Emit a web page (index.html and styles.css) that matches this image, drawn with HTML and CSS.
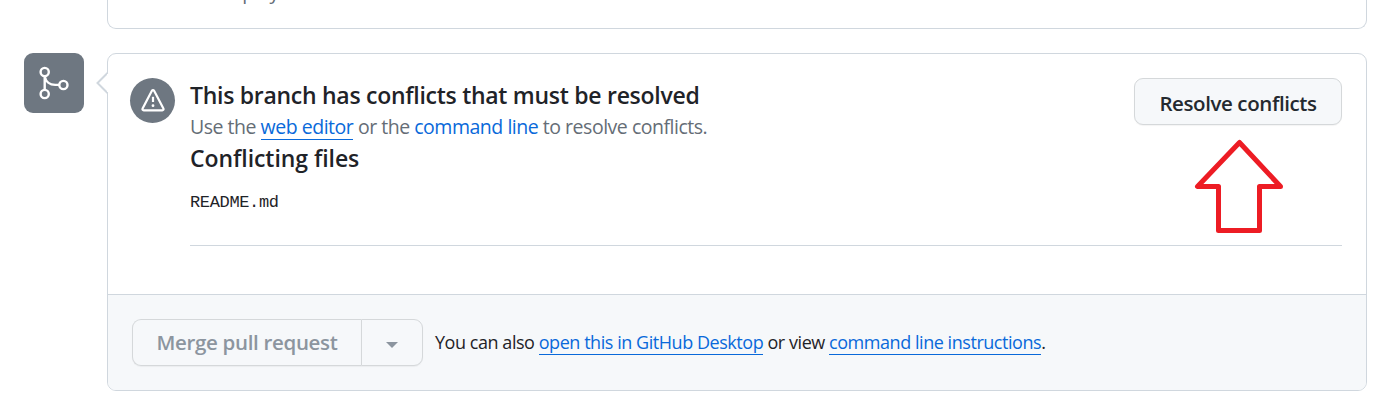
FILE: index.html
```html
<!DOCTYPE html>
<html lang="en">
<head>
<meta charset="utf-8">
<title>Merge conflicts</title>
<link rel="stylesheet" href="styles.css">
</head>
<body>
<section class="previous"><p class="previous-text">No deployments</p></section>
<main class="merge">
  <div class="avatar">
    <svg width="60" height="60" viewBox="0 0 60 60" fill="none" stroke="#fff" stroke-width="2.4"><circle cx="20.700" cy="19" r="4.100"/><circle cx="20.700" cy="41" r="4.100"/><circle cx="39.400" cy="32" r="4.100"/><path d="M20.700 23v14M20.700 23.500c1 5 5 8.400 10.500 8.400h4.300"/></svg>
  </div>
  <div class="panel">
    <svg class="caret" width="13" height="24" viewBox="0 0 13 24"><path d="M11.500 2 1.500 12 11.500 22" fill="#fff" stroke="#d0d7de" stroke-width="2"/><path d="M11.500 3v18" stroke="#fff"/></svg>
    <div class="status">
      <div class="warning">
        <svg width="45" height="45" viewBox="0 0 45 45" fill="none" stroke="#fff" stroke-linejoin="round"><path d="M21.900 12.800 12.600 30.400c-.5 1 .1 1.900 1.100 1.900h18.600c1 0 1.600-.9 1.100-1.900L24.100 12.800c-.5-.8-1.700-.8-2.200 0Z" stroke-width="2.200"/><path d="M23 18.800v5.200" stroke-width="2.200"/><circle cx="23" cy="27.700" r="1.400" fill="#fff" stroke="none"/></svg>
      </div>
      <div class="details">
        <div class="top">
          <div class="copy">
            <h2 class="heading">This branch has conflicts that must be resolved</h2>
            <p class="hint">Use the <a class="link underlined">web editor</a> or the <a class="link">command line</a> to resolve conflicts.</p>
            <h2 class="heading second">Conflicting files</h2>
          </div>
          <button class="button resolve">Resolve conflicts</button>
        </div>
        <div class="files">README.md</div>
      </div>
    </div>
    <footer class="footer">
      <div class="group">
        <button class="button pull">Merge pull request</button>
        <button class="button more" aria-label="More options"><svg width="12" height="6" viewBox="0 0 12 6"><path d="M0 0h12L6 6Z" fill="#8c959f"/></svg></button>
      </div>
      <p class="note">You can also <a class="link underlined">open this in GitHub Desktop</a> or view <a class="link underlined">command line instructions</a>.</p>
    </footer>
  </div>
  <svg class="arrow" width="90" height="96" viewBox="0 0 90 96"><path d="M45.500 4.500 3.500 48.500H24.500V92.500H65.500V48.500H86.500Z" fill="none" stroke="#ed1c24" stroke-width="5" stroke-linejoin="round"/></svg>
</main>
</body>
</html>
```
FILE: styles.css
```css
* { box-sizing: border-box; }
body { margin: 0; height: 403px; overflow: hidden; background: #fff; color: #1f2328; font-family: "Open Sans", "Noto Sans", sans-serif; }
h2, p { margin: 0; font-weight: 400; white-space: nowrap; }
.previous { height: 29px; margin: 0 18px 24px 107px; border: 1px solid #d0d7de; border-top: 0; border-radius: 0 0 9px 9px; overflow: hidden; }
.previous-text { margin: -21px 0 0 82px; font-size: 19.500px; line-height: 26px; letter-spacing: -.440px; color: #656d76; }
.merge { position: relative; display: flex; gap: 23px; padding: 0 18px 0 24px; }
.avatar { flex: none; width: 60px; height: 60px; border-radius: 9px; background: #6e7781; }
.avatar svg, .warning svg { display: block; }
.panel { position: relative; flex: 1; height: 338px; display: flex; flex-direction: column; border: 1px solid #d0d7de; border-radius: 9px; }
.caret { position: absolute; left: -12px; top: 17px; }
.status { flex: 1; display: flex; gap: 15px; padding: 24px 24px 0 22px; }
.warning { flex: none; width: 45px; height: 45px; border-radius: 50%; background: #6e7781; }
.details { flex: 1; height: 168px; border-bottom: 1px solid #d0d7de; }
.top { display: flex; justify-content: space-between; }
.copy { margin-top: -1px; }
.heading { font-size: 23px; line-height: 36px; font-weight: 600; letter-spacing: -.280px; }
.second { letter-spacing: -.060px; }
.hint { height: 27px; font-size: 19.500px; line-height: 27px; color: #656d76; letter-spacing: -.480px; }
.link { color: #0969da; }
.underlined { border-bottom: 1px solid #0969da; }
.hint .underlined { display: inline-block; height: 27px; }
.note .underlined { display: inline-block; height: 25px; }
.button { height: 47px; padding: 0; border: 1px solid #d5d8da; border-radius: 9px; background: #f6f8fa; box-shadow: 0 1px 1px rgba(31,35,40,.05); color: #24292f; font: 500 20.500px/45px "Open Sans", sans-serif; white-space: nowrap; }
.resolve { width: 208px; padding-top: 3px; line-height: 42px; font-weight: 600; letter-spacing: -.400px; }
.files { margin-top: 17px; font: 17px/20px "Liberation Mono", monospace; letter-spacing: -.350px; }
.footer { height: 96px; display: flex; align-items: center; gap: 12px; padding-left: 24px; border-top: 1px solid #d0d7de; border-radius: 0 0 8px 8px; background: #f6f8fa; }
.group { display: flex; }
.pull { width: 229px; border-radius: 9px 0 0 9px; border-right: 0; color: #8c959f; font-weight: 600; letter-spacing: -.330px; }
.more { width: 62px; border-radius: 0 9px 9px 0; display: flex; align-items: center; justify-content: center; padding-top: 4px; }
.note { height: 25px; font-size: 18px; line-height: 24px; letter-spacing: -.450px; }
.arrow { position: absolute; left: 1194px; top: 85px; }
```
